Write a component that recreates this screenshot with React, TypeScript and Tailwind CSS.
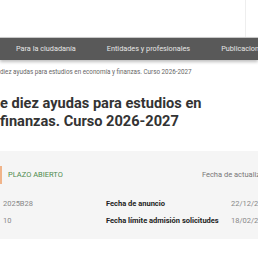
const App = () => {
  return (
    <div className="w-[258px] h-[258px] overflow-hidden bg-white font-['Roboto',sans-serif] relative">
      <div className="h-[37px] flex">
        <div className="w-[245px]"></div>
        <div className="w-px h-full bg-[#eeeeee]"></div>
      </div>
      <nav className="h-[23px] bg-[#595959] border-t border-[#c8c8c8] shadow-[0_2px_3px_rgba(0,0,0,0.25)] flex items-center text-[7.3px] text-[#e6e6e6] whitespace-nowrap">
        <span className="shrink-0 ml-[16px]">Para la ciudadanía</span>
        <span className="shrink-0 ml-[31px]">Entidades y profesionales</span>
        <span className="shrink-0 ml-[31px]">Publicaciones</span>
      </nav>
      <p className="mt-[6px] text-[6.3px] text-[#666666] whitespace-nowrap leading-[12px]">
        diez ayudas para estudios en economía y finanzas. Curso 2026-2027
      </p>
      <h1 className="mt-[16px] text-[14.6px] font-bold text-[#333333] leading-[18px] whitespace-nowrap">
        e diez ayudas para estudios en
        <br />
        finanzas. Curso 2026-2027
      </h1>
      <section className="mt-[21px] bg-[#f5f5f5] h-[88px] pt-[15px] text-[7.5px] whitespace-nowrap">
        <div className="flex items-center h-[18px]">
          <div className="shrink-0 w-[2px] h-full bg-[#f0b48a]"></div>
          <span className="shrink-0 ml-[6px] text-[#4d8a4d]">PLAZO ABIERTO</span>
          <span className="shrink-0 ml-[139px] text-[#777777]">Fecha de actualización</span>
        </div>
        <div className="mt-[11px] flex h-[17px] items-center">
          <span className="shrink-0 w-[106px] pl-[3px] text-[#888888]">2025B28</span>
          <span className="shrink-0 w-[125px] font-bold text-[#222222]">Fecha de anuncio</span>
          <span className="shrink-0 text-[#888888]">22/12/2025</span>
        </div>
        <div className="flex h-[17px] items-center">
          <span className="shrink-0 w-[106px] pl-[3px] text-[#888888]">10</span>
          <span className="shrink-0 w-[125px] font-bold text-[#222222]">Fecha límite admisión solicitudes</span>
          <span className="shrink-0 text-[#888888]">18/02/2026</span>
        </div>
      </section>
    </div>
  );
};

export default App;
